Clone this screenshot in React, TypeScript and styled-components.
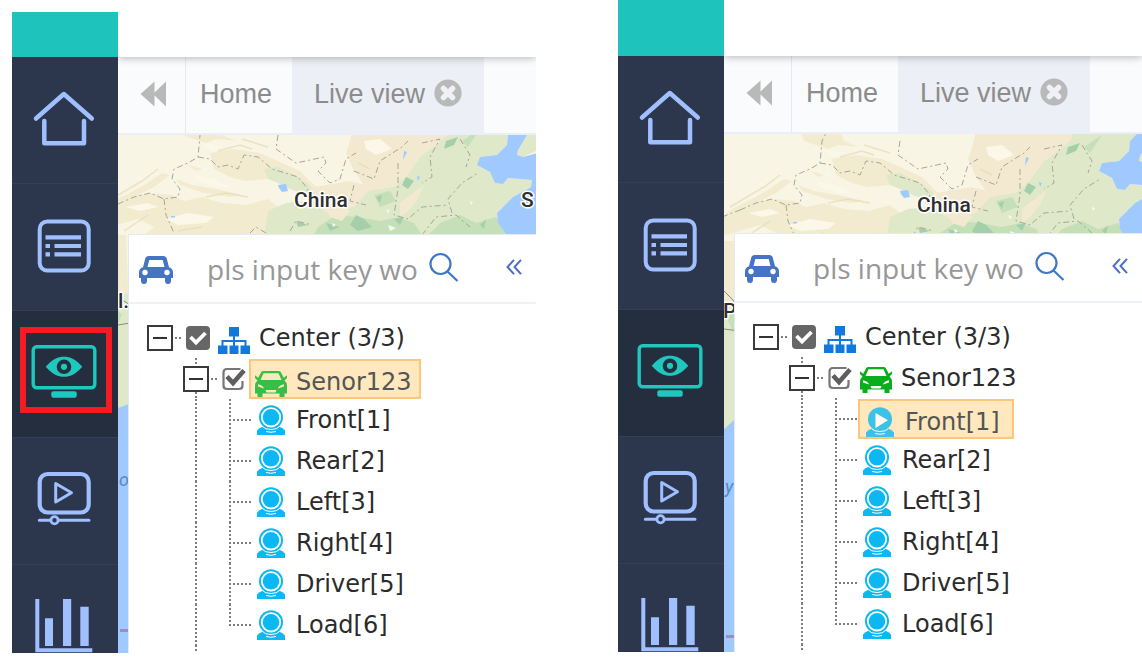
import React from "react";
import styled, { createGlobalStyle, css } from "styled-components";

const Global = createGlobalStyle`
  *, *::before, *::after { box-sizing: border-box; }
  body { margin: 0; background: #fff; }
  button { border: 0; padding: 0; margin: 0; background: none; font: inherit; color: inherit; cursor: pointer; }
  ul { list-style: none; margin: 0; padding: 0; }
`;

/* ---------- page frame ---------- */

const Page = styled.main`
  display: grid;
  grid-template-columns: minmax(0, 1fr) minmax(0, 1fr);
  column-gap: 82px;
  align-items: start;
  padding-left: 12px;
`;

const Window = styled.section<{ $top: number }>`
  display: grid;
  grid-template-columns: 106px minmax(0, 1fr);
  margin-top: ${(p) => p.$top}px;
  overflow: hidden;
`;

const Sidebar = styled.nav`
  display: flex;
  flex-direction: column;
  background: #2c374d;
`;

const Brand = styled.div<{ $h: number }>`
  height: ${(p) => p.$h}px;
  background: #1ec3bb;
`;

const NavButton = styled.button<{ $active?: boolean; $marked?: boolean }>`
  position: relative;
  display: flex;
  justify-content: center;
  padding: 34px 0 38px;
  border-bottom: 1px solid #323f5a;
  color: ${(p) => (p.$active ? "#1ec8be" : "#9fbfff")};
  background: ${(p) => (p.$active ? "#252e3e" : "transparent")};
  &:last-child { padding-bottom: 0; border-bottom: 0; }
  svg { display: block; overflow: visible; margin-right: 1px; }
  ${(p) =>
    p.$marked &&
    css`
      &::after {
        content: "";
        position: absolute;
        inset: 16px 6px 24px 8px;
        border: 6px solid #f51b22;
      }
    `}
`;

const Content = styled.div`
  display: flex;
  flex-direction: column;
  min-width: 0;
  overflow: hidden;
`;

const Header = styled.header<{ $h: number }>`
  position: relative;
  z-index: 1;
  height: ${(p) => p.$h}px;
  background: #fff;
  box-shadow: 0 1px 8px rgba(0, 0, 0, 0.28);
`;

/* ---------- tabs ---------- */

const TabBar = styled.div`
  display: flex;
  height: 78px;
  background: #fafbfd;
  border-bottom: 2px solid #e9eef8;
  color: #8c8c8c;
  font: 27px "Liberation Sans", Arial, sans-serif;
`;

const BackButton = styled.button`
  width: 68px;
  padding: 0 0 3px 3px;
  border-right: 1px solid #e4e9f4;
  svg { display: block; margin: 0 auto; }
`;

const Tab = styled.div<{ $active?: boolean }>`
  display: flex;
  align-items: center;
  gap: 9px;
  padding: ${(p) => (p.$active ? "0 22px 2px 22px" : "0 20px 2px 14px")};
  background: ${(p) => (p.$active ? "#eceff5" : "transparent")};
  white-space: nowrap;
  svg { display: block; margin-bottom: 3px; }
`;

/* ---------- map and floating panel ---------- */

const MapArea = styled.div`
  position: relative;
  flex: 1;
  padding: 99px 0 0 10px;
  background: #f9f5e4;
`;

const MapDrawing = styled.svg`
  position: absolute;
  inset: 0;
  width: 100%;
  height: 100%;
`;

const Panel = styled.div`
  position: relative;
  height: 100%;
  background: #fff;
  border: solid #e4ebf8;
  border-width: 1px 0 0 1px;
`;

const SearchBar = styled.div`
  display: flex;
  align-items: center;
  height: 69px;
  padding-left: 10px;
  border-bottom: 2px solid #eef1f7;
  svg { display: block; flex: none; margin-top: 2px; }
`;

const SearchInput = styled.input`
  flex: none;
  width: 222px;
  margin-left: 34px;
  padding: 0;
  border: 0;
  outline: 0;
  background: transparent;
  color: #555;
  font: 28px "Open Sans", "Noto Sans", sans-serif;
  &::placeholder { color: #979797; opacity: 1; }
`;

const IconButton = styled.button<{ $gap?: number }>`
  margin-left: ${(p) => p.$gap ?? 0}px;
  padding-bottom: 6px;
  color: #3e78c4;
`;

/* ---------- tree ---------- */

const TreeRoot = styled.div`
  padding: 13px 0 0 18px;
  color: #2b2b2b;
  font: 24px/43px "DejaVu Sans", Verdana, sans-serif;
`;

const Row = styled.div<{ $indent?: number; $h?: number }>`
  display: flex;
  height: ${(p) => p.$h ?? 41}px;
  padding-left: ${(p) => p.$indent ?? 0}px;
`;

const dotsV = css`
  background: repeating-linear-gradient(#7d7d7d 0 2px, transparent 2px 4px) center top / 2px 100% no-repeat;
`;

const ExpandCell = styled.div`
  display: flex;
  flex-direction: column;
  width: 26px;
`;

const Dots = styled.i<{ $on?: boolean }>`
  flex: 1;
  ${(p) => p.$on && dotsV}
`;

const Expander = styled.button`
  display: grid;
  place-items: center;
  width: 26px;
  height: 26px;
  border: 2px solid #3a3a3a;
  background: #fff;
  &::before { content: ""; width: 14px; height: 2px; background: #333; }
`;

const Connector = styled.i`
  align-self: center;
  width: 7px;
  height: 2px;
  margin: 0 4px 0 2px;
  background: repeating-linear-gradient(90deg, #7d7d7d 0 2px, transparent 2px 4px);
`;

const CheckLabel = styled.label`
  display: grid;
  align-content: center;
  width: 24px;
  margin-right: 3px;
  input, svg { grid-area: 1 / 1; width: 24px; height: 24px; margin: 0; }
  input { opacity: 0; }
  svg { display: block; pointer-events: none; }
`;

const Node = styled.button<{ $selected?: boolean; $leaf?: boolean }>`
  display: flex;
  gap: ${(p) => (p.$leaf ? 11 : 9)}px;
  height: 41px;
  padding: 0 ${(p) => (p.$leaf ? 12 : 7)}px 0 5px;
  white-space: nowrap;
  line-height: inherit;
  svg { display: block; margin-top: ${(p) => (p.$leaf ? 6 : 10)}px; }
  ${(p) =>
    p.$selected &&
    css`
      height: 40px;
      margin-top: 1px;
      border: 2px solid #ffc67a;
      padding-left: ${p.$leaf ? 6 : 4}px;
      background: #ffe8bd;
      color: #555;
      line-height: 42px;
    `}
`;

const Guide = styled.i`
  width: 26px;
  ${dotsV}
`;

const Branch = styled.i<{ $last?: boolean }>`
  width: 23px;
  margin-left: 20px;
  background:
    repeating-linear-gradient(#7d7d7d 0 2px, transparent 2px 4px) left top / 2px ${(p) => (p.$last ? "22px" : "100%")} no-repeat,
    repeating-linear-gradient(90deg, #7d7d7d 0 2px, transparent 2px 4px) left 20px / 22px 2px no-repeat;
`;

/* ---------- icons ---------- */

const navIcons: Record<string, React.ReactNode> = {
  Home: (
    <g fill="none" stroke="currentColor" strokeWidth="4.5" strokeLinecap="round" strokeLinejoin="round">
      <path d="M5 27.5 32.8 3 60.8 27.5" />
      <path d="M13.3 30V52.3H53V30" />
    </g>
  ),
  List: (
    <g fill="none" stroke="currentColor" strokeWidth="4">
      <rect x="8.7" y="3.5" width="49" height="49" rx="7.5" />
      <path d="M14.5 19.4H50M14.5 28H19M23.5 28H50M14.5 36.4H19M23.5 36.4H50" strokeWidth="4.2" />
    </g>
  ),
  "Live view": (
    <g>
      <rect x="2.2" y="1.7" width="61.6" height="41" rx="3.5" fill="none" stroke="currentColor" strokeWidth="3.4" />
      <path d="M14.7 21.8C22 13.5 27 11.8 33 11.8S44 13.5 51.3 21.8C44 30 39 31.8 33 31.8S22 30 14.7 21.8Z" fill="currentColor" />
      <circle cx="33" cy="21.8" r="5.2" fill="currentColor" stroke="#252e3e" strokeWidth="4.2" />
    <rect x="20.3" y="46.2" width="25.4" height="6.6" rx="2" fill="currentColor" />
    </g>
  ),
  Playback: (
    <g fill="none" stroke="currentColor">
      <rect x="8.7" y="2" width="49" height="38.5" rx="8" strokeWidth="4.2" />
      <path d="M24.7 11.5V30L40.5 20.7Z" strokeWidth="3" strokeLinejoin="round" />
      <path d="M8.3 48.2H19.5M27.5 48.2H58" strokeWidth="3" strokeLinecap="round" />
      <circle cx="23.5" cy="48.2" r="3.6" strokeWidth="2.8" />
    </g>
  ),
  Reports: (
    <g fill="currentColor">
      <path d="M4.3 0H8.3V49.3H61.3V53.3H4.3Z" />
      <path d="M14 19.3H22V47H14ZM32 0H40.2V47H32ZM49.3 7.7H57.7V47H49.3Z" />
    </g>
  ),
};

const Rewind = () => (
  <svg width="26" height="26" viewBox="0 0 26 26" fill="#b9b9b9" aria-hidden="true">
    <path d="M14.5 .5V25.5L.5 13ZM26 .5V25.5L13 13Z" />
  </svg>
);

const CloseDisc = () => (
  <svg width="28" height="28" viewBox="0 0 28 28" aria-hidden="true">
    <circle cx="14" cy="14" r="13.6" fill="#b9b9b9" />
    <path
      d="M9.5 9.5 18.500 18.500M18.500 9.500 9.500 18.500"
      stroke="#eff1f6"
      strokeWidth="5.500"
      strokeLinecap="round"
    />
  </svg>
);

const BlueCar = () => (
  <svg width="34" height="28" viewBox="0 0 34 28" aria-hidden="true">
    <path
      fill="#4574c4"
      fillRule="evenodd"
      d="M9.8 0H24.2Q27 0 27.8 2.8L30 11.2Q34 12.5 34 16.5V22H32V24.5Q32 28 29 28T26 24.5V22H8V24.5Q8 28 5 28T2 24.5V22H0V16.5Q0 12.5 4 11.2L6.2 2.8Q7 0 9.8 0ZM10.3 4 8.5 11H25.5L23.7 4Z"
    />
    <circle cx="6" cy="16.500" r="2.700" fill="#fff" />
    <circle cx="28" cy="16.500" r="2.700" fill="#fff" />
  </svg>
);

const Magnifier = () => (
  <svg width="30" height="30" viewBox="0 0 30 30" fill="none" stroke="currentColor" strokeWidth="2.2" aria-hidden="true">
    <circle cx="11.5" cy="12" r="10" />
    <path d="M18.5 19.5 28.5 29" />
  </svg>
);

const ChevronsLeft = () => (
  <svg width="16" height="16" viewBox="0 0 16 16" fill="none" stroke="#4a6fc4" strokeWidth="2" aria-hidden="true">
    <path d="M8 .8 1.5 8 8 15.2M15 .8 8.5 8 15 15.2" />
  </svg>
);

const CheckSolid = () => (
  <svg viewBox="0 0 24 24" aria-hidden="true">
    <rect width="24" height="24" rx="4" fill="#666" />
    <path d="M4.5 11 10 16.5 19.5 7" fill="none" stroke="#fff" strokeWidth="3.8" />
  </svg>
);

const CheckOutline = () => (
  <svg viewBox="0 0 24 24" fill="none" aria-hidden="true">
    <path d="M18.5 2H5Q1.5 2 1.5 5.5V18.5Q1.5 22 5 22H17Q20.5 22 20.5 18.5V14" stroke="#777" strokeWidth="2.2" />
    <path d="M5 9.5 11 16 22 3.5" stroke="#5e5e5e" strokeWidth="4.6" />
  </svg>
);

const Sitemap = () => (
  <svg width="32" height="27" viewBox="0 0 32 27" fill="#1279dc" aria-hidden="true">
    <path d="M11 0H21V9.5H17V13H28.5V18.5H32V27H22.5V18.5H26.5V15H17V18.5H20.5V27H11.5V18.5H15V15H5.5V18.5H9.5V27H0V18.5H3.5V13H15V9.5H11Z" />
  </svg>
);

const Vehicle = ({ color }: { color: string }) => (
  <svg width="32" height="26" viewBox="0 0 32 26" aria-hidden="true">
    <path
      fill={color}
      fillRule="evenodd"
      d="M8 0H24Q25.5 0 26 1.5L28.8 6.8 32 4.2V7L29.5 9.5Q32 11.5 32 14.5V22.5H29.5V26H24.5V22.5H7.5V26H2.5V22.5H0V14.5Q0 11.5 2.5 9.5L0 7V4.2L3.2 6.8 6 1.5Q6.5 0 8 0ZM8.5 2.2 5.5 9H26.5L23.5 2.2ZM3 13.2V15.5L9 17.5Q8.5 14.5 3 13.2ZM29 13.2V15.5L23 17.5Q23.5 14.5 29 13.2ZM10.5 19 11.5 21.5H20.5L21.5 19Z"
    />
  </svg>
);

const Camera = ({ playing }: { playing?: boolean }) => (
  <svg width="28" height="30" viewBox="0 0 28 30" aria-hidden="true" opacity={playing ? 0.8 : 1}>
    <path fill="#0cb8f2" d="M0 30V25.500Q2 23 6 21.500H22Q26 23 28 25.500V30Z" />
    <circle cx="14" cy="12.300" r="12" fill="#0cb8f2" />
    {playing ? (
      <path d="M9.500 6 22 13.300 9.500 21Z" fill="#fff" />
    ) : (
      <circle cx="14" cy="12.300" r="9.200" fill="#0cb8f2" stroke="#fff" strokeWidth="1.800" />
    )}
    <path d="M5.500 21.500Q8 24.500 14 24.500T22.500 21.500M9 26.500Q14 28 19 26.500" fill="none" stroke="#fff" strokeWidth="1" />
  </svg>
);

/* ---------- map ---------- */

type Label = { x: number; y: number; text: string; water?: boolean };

const MapArt = ({ dx, dy, labels }: { dx: number; dy: number; labels: Label[] }) => (
  <MapDrawing aria-hidden="true">
    <g transform={`translate(${dx} ${dy})`}>
      <rect x="-20" y="-10" width="470" height="700" fill="#f9f5e4" />
      <g fill="#f2ebcf">
        <path d="M-20 78Q-8 66 8 60L26 50 44 38 52 40 36 52 20 60 34 58 54 60 66 66 84 62 104 68 128 70 150 64 160 72 158 100 26 100 36 92 20 84 6 88-20 96Z" />
        <path d="M60-10H100L104 0 118 6 98 4 88 8 64 0ZM92 18 116 14 142 18 160 26 182 36 196 50 210 58 204 66 186 60 172 50 150 44 128 46 112 42 96 34Z" />
        <path d="M98 22 114 20 138 30 130 40 112 34Z" />
        <path d="M58 44 74 50 98 54 124 60 112 62 86 58 62 50ZM70 30 84 34 78 36ZM-20 100 8 100 11 180-20 180Z" />
      </g>
      <g fill="#f3e9d0">
        <path d="M236-10H335L330 0 318 18 300 24 292 44 280 54 262 56 246 50 236 36 228 18 232 6ZM196 52 232 46 262 54 290 50 300 62 286 76 258 70 236 74 220 92 200 80 190 66Z" />
      </g>
      <g fill="#fbf8ea">
        <path d="M48 84 70 78 96 82 88 88 60 90ZM8 72 30 68 40 72 22 76ZM246 6 262 4 274 14 258 20 248 14ZM84 8 104 12 94 16ZM76 40 96 44 112 52 98 52 80 46Z" />
      </g>
      <g fill="#dfe9ca">
        <path d="M146 34 160 32 180 42 194 52 188 60 172 54 160 48 150 44Z" />
        <path d="M150 76 168 68 190 66 210 78 236 72 250 56 276 52 290 40 302 22 318 10 330 0 334-10H402L390 0 389 10 379 20 362 22 359 30 372 37 377 48 385 49 390 43 414 45 413 52 395 62 389 68 379 78 380 88 392 104H146Z" />
        <path d="M409-10V0L400 15 399 20 405 22 440 6V-10Z" />
        <path d="M-20 168 0 160 11 158 14 274-20 300Z" />
      </g>
      <g fill="#c5e0b8">
        <path d="M310 100 322 88 342 80 358 88 378 82 392 102ZM200 92 218 80 240 82 262 86 280 82 296 88 304 100H196ZM256 60 272 56 278 66 262 72ZM344 6 362-6 350 12ZM-14 176-6 168 4 180-4 196Z" />
      </g>
      <g fill="#a5cfaa">
        <path d="M238 80 246 84 254 92 240 96 232 90ZM288 42 296 46 290 54 284 50ZM294 58 300 62 290 72 284 74ZM258 62 264 60 262 68ZM328 6 340 2 336 10 326 14ZM362 90 368 84 366 94ZM276 84 286 82 282 90ZM208 88 222 92 212 96ZM178 86 190 90 180 92Z" />
      </g>
      <g fill="#f3e9d0">
        <path d="M206 70 222 66 232 76 224 86 212 82ZM282 68 292 60 306 50 300 64 290 76 282 82Z" />
      </g>
      <g fill="#f6faf0">
        <path d="M270 90 278 93 272 96ZM214 88 218 90 215 92ZM352 66 355 67 353 70ZM268 74 272 76 270 78ZM84 32 92 33 86 35ZM20 42 26 43 22 45Z" />
      </g>
      <g fill="#9fc9ff">
        <path d="M400-10 390 0 389 10 379 20 362 22 359 30 372 37 377 48 385 49 390 43 414 45 413 52 395 62 389 68 379 78 380 88 392 104H450V10L405 22 399 20 400 15 409 0V-10Z" />
        <path d="M160 50 168 49 170 56 164 57 161 53ZM286 16 289 17 285 25ZM299 41 302 42 300 46ZM53 81H57V82.5H53Z" />
        <path d="M-20 292-6 279 0 273 14 268V700H-20Z" />
      </g>
      <g fill="none" stroke="#a7a59a" strokeWidth="1" strokeDasharray="6 3 2 3">
        <path d="M0 69 16 62 32 58 46 64 60 62 62 54 54 44 56 34 70 28 80 22 82 0 86-8M-18 76 0 69M46 64 48 80 56 98" />
        <path d="M80 22 92 24 100 32 110 30 120 34 126 20 140 22 154 34 180 42 190 54 186 62M160 0 158 14 178 28 206 22 208 28 200 36 212 48 222 44 228 24 238 18" />
        <path d="M236 36 256 44 262 26 284 12 290 6M236 50 232 66 248 70M280 28 280 54 276 80 290 84 304 72 330 70M304 8 322 4 312 22 314 42 304 48M334 78 330 64 344 48 360 38M342 4 352 20 348 32M132 98 138 92 148 98M172 96 178 86 194 90M304 100 318 82 338 80 352 92" />
      </g>
      <g fill="none" stroke="#e6ddbc" strokeWidth="1.5" opacity=".8">
        <path d="M-10 66 24 46 40 34M88 62 108 58 130 62M100 16 122 10 134 14M60 96 84 92M124 4 150 12M6 96 30 80M240 28 252 34" />
      </g>
      <g fill="none" stroke="#8c8a80" strokeWidth="1">
        <path d="M-16 150-8 158-2 166 6 166 12 170M-16 188 0 190 12 188" />
      </g>
      <path d="M-14 495.500H-2M2 495.500H14" stroke="#9a8fb8" strokeWidth="3" />
    </g>
    {labels.map((l) => (
      <text
        key={l.text}
        x={l.x}
        y={l.y}
        fontFamily="Roboto, sans-serif"
        fontSize={l.water ? 18 : 21}
        fontWeight={l.water ? 400 : 500}
        fontStyle={l.water ? "italic" : "normal"}
        fill={l.water ? "#5a86c9" : "#2f2f2f"}
        stroke={l.water ? "none" : "#fff"}
        strokeWidth="3"
        strokeLinejoin="round"
        paintOrder="stroke"
      >
        {l.text}
      </text>
    ))}
  </MapDrawing>
);

/* ---------- one application window ---------- */

const cameras = ["Front[1]", "Rear[2]", "Left[3]", "Right[4]", "Driver[5]", "Load[6]"];

type ScreenProps = {
  top: number;
  headerHeight: number;
  marked?: boolean;
  selected: string;
  shift: [number, number];
  labels: Label[];
};

const Screen = ({ top, headerHeight, marked, selected, shift, labels }: ScreenProps) => (
  <Window $top={top}>
    <Sidebar>
      <Brand $h={headerHeight} />
      {Object.entries(navIcons).map(([name, art]) => (
        <NavButton
          key={name}
          type="button"
          aria-label={name}
          $active={name === "Live view"}
          $marked={marked && name === "Live view"}
        >
          <svg width="67" height="54" viewBox="0 0 67 54" aria-hidden="true">
            {art}
          </svg>
        </NavButton>
      ))}
    </Sidebar>
    <Content>
      <Header $h={headerHeight} />
      <TabBar>
        <BackButton type="button" aria-label="Scroll tabs back">
          <Rewind />
        </BackButton>
        <Tab>
          <button type="button">Home</button>
        </Tab>
        <Tab $active>
          <button type="button">Live view</button>
          <button type="button" aria-label="Close tab">
            <CloseDisc />
          </button>
        </Tab>
      </TabBar>
      <MapArea>
        <MapArt dx={shift[0]} dy={shift[1]} labels={labels} />
        <Panel>
          <SearchBar>
            <BlueCar />
            <SearchInput type="text" aria-label="Key word" placeholder="pls input key wo" />
            <IconButton type="button" aria-label="Search">
              <Magnifier />
            </IconButton>
            <IconButton type="button" aria-label="Collapse panel" $gap={47}>
              <ChevronsLeft />
            </IconButton>
          </SearchBar>
          <TreeRoot>
            <Row>
              <ExpandCell>
                <Dots />
                <Expander type="button" aria-label="Collapse Center" />
                <Dots />
              </ExpandCell>
              <Connector />
              <CheckLabel>
                <input type="checkbox" aria-label="Center" defaultChecked />
                <CheckSolid />
              </CheckLabel>
              <Node type="button">
                <Sitemap />
                Center (3/3)
              </Node>
            </Row>
            <Row $indent={36}>
              <ExpandCell>
                <Dots $on />
                <Expander type="button" aria-label="Collapse Senor123" />
                <Dots $on />
              </ExpandCell>
              <Connector />
              <CheckLabel>
                <input type="checkbox" aria-label="Senor123" defaultChecked />
                <CheckOutline />
              </CheckLabel>
              <Node type="button" $selected={selected === "Senor123"}>
                <Vehicle color={selected === "Senor123" ? "#3abd48" : "#0aad1c"} />
                Senor123
              </Node>
            </Row>
            <ul>
              {cameras.map((name, i) => (
                <li key={name}>
                  <Row $indent={36}>
                    <Guide />
                    <Branch $last={i === cameras.length - 1} />
                    <Node type="button" $leaf $selected={selected === name}>
                      <Camera playing={selected === name} />
                      {name}
                    </Node>
                  </Row>
                </li>
              ))}
            </ul>
            <Row $indent={36} $h={7}>
              <Guide />
            </Row>
          </TreeRoot>
        </Panel>
      </MapArea>
    </Content>
  </Window>
);

export default function App() {
  return (
    <>
      <Global />
      <Page>
        <Screen
          top={12}
          headerHeight={45}
          marked
          selected="Senor123"
          shift={[0, 0]}
          labels={[
            { x: 176, y: 72, text: "China" },
            { x: 403, y: 72, text: "S" },
            { x: 0, y: 173, text: "l." },
            { x: 1, y: 351, text: "o", water: true },
          ]}
        />
        <Screen
          top={0}
          headerHeight={56}
          selected="Front[1]"
          shift={[16, 7]}
          labels={[
            { x: 193, y: 78, text: "China" },
            { x: -1, y: 184, text: "P" },
            { x: 1, y: 359, text: "y", water: true },
          ]}
        />
      </Page>
    </>
  );
}
